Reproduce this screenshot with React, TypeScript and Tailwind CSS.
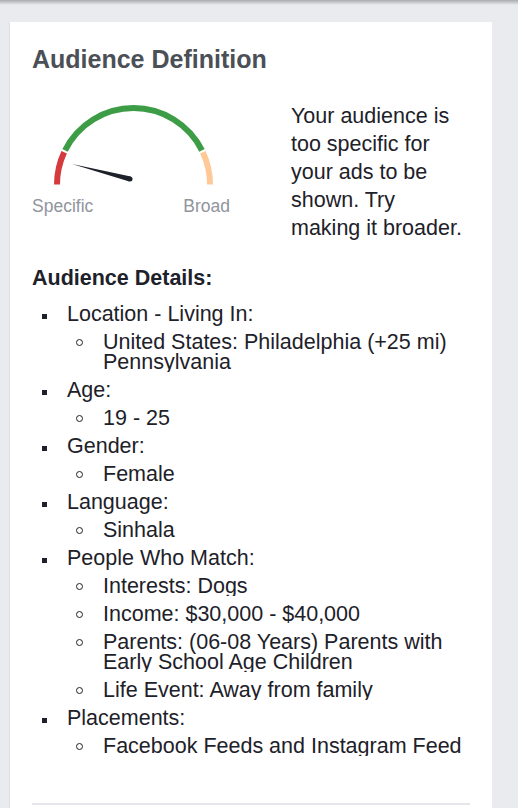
type Item = { label: string; values: string[] };

const details: Item[] = [
  { label: 'Location - Living In:', values: ['United States: Philadelphia (+25 mi) Pennsylvania'] },
  { label: 'Age:', values: ['19 - 25'] },
  { label: 'Gender:', values: ['Female'] },
  { label: 'Language:', values: ['Sinhala'] },
  {
    label: 'People Who Match:',
    values: [
      'Interests: Dogs',
      'Income: $30,000 - $40,000',
      'Parents: (06-08 Years) Parents with Early School Age Children',
      'Life Event: Away from family',
    ],
  },
  { label: 'Placements:', values: ['Facebook Feeds and Instagram Feed'] },
];

function Gauge() {
  return (
    <div className="w-[259px] shrink-0">
      <svg width="200" height="86" viewBox="0 0 200 86" className="block">
        <path d="M25 82.5 A76.5 76.5 0 0 1 32.17 50.17" fill="none" stroke="#d53a3c" strokeWidth="6" />
        <path d="M33.04 48.37 A76.5 76.5 0 0 1 169.96 48.37" fill="none" stroke="#3d9c46" strokeWidth="6" />
        <path d="M170.83 50.17 A76.5 76.5 0 0 1 178 82.5" fill="none" stroke="#fec997" strokeWidth="6" />
        <polygon points="98.7,74.6 97.3,79.4 40,62" fill="#1d2129" />
        <circle cx="98" cy="77" r="2.5" fill="#1d2129" />
      </svg>
      <div className="mt-2 flex w-[198px] justify-between text-[17.5px] leading-[20px] text-[#90949c]">
        <span>Specific</span>
        <span>Broad</span>
      </div>
    </div>
  );
}

export default function App() {
  return (
    <div className="min-h-screen bg-[#e9ebee] font-['Liberation_Sans',Arial,sans-serif]">
      <div className="h-[5px] bg-linear-to-b from-[#a9abaf] to-[#e9ebee]" />
      <div className="mt-[17px] ml-[9px] w-[483px] border-l border-[#dfe1e5] bg-white px-[22px] pt-[22px] pb-[40px]">
        <h2 className="text-[25px] leading-[30px] font-bold text-[#4b4f56]">Audience Definition</h2>

        {/* gauge + message */}
        <div className="mt-[28px] flex">
          <Gauge />
          <p className="w-[176px] text-[21.5px] leading-[28px] text-[#1d2129]">
            Your audience is too specific for your ads to be shown. Try making it broader.
          </p>
        </div>

        <h3 className="mt-[26px] text-[21.5px] leading-[20px] font-bold text-[#1d2129]">Audience Details:</h3>
        <ul className="mt-[16px] flex flex-col gap-2 text-[21.5px] text-[#1d2129]">
          {details.map((d) => (
            <li key={d.label} className="flex">
              <span className="w-[35px] shrink-0 pt-[9.5px] pl-[10px]">
                <span className="block size-[5px] bg-[#1d2129]" />
              </span>
              <div className="min-w-0 flex-1">
                <div className="leading-[20px]">{d.label}</div>
                <ul className="mt-2 flex flex-col gap-2">
                  {d.values.map((v) => (
                    <li key={v} className="flex">
                      <span className="w-[36px] shrink-0 pt-[7px] pl-[9px]">
                        <span className="block size-[7px] rounded-full border-[1.5px] border-[#1d2129]" />
                      </span>
                      <div className="min-w-0 flex-1 overflow-hidden leading-[20px]">{v}</div>
                    </li>
                  ))}
                </ul>
              </div>
            </li>
          ))}
        </ul>

        <div className="mt-[47px] h-[2px] bg-[#e5e6e9]" />
        <div className="h-[60px]" />
      </div>
    </div>
  );
}
